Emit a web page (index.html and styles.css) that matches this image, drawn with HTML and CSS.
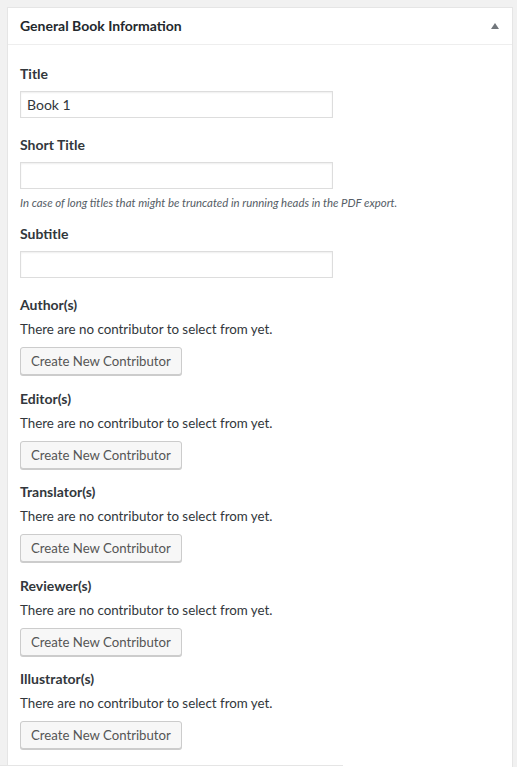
FILE: index.html
```html
<!DOCTYPE html>
<html lang="en">
<head>
<meta charset="utf-8">
<title>General Book Information</title>
<link rel="stylesheet" href="styles.css">
</head>
<body>
<div class="postbox">
  <div class="postbox-header">
    <h2 class="postbox-title">General Book Information</h2>
    <span class="toggle-arrow"></span>
  </div>
  <div class="inside">
    <div class="field">
      <label class="field-label">Title</label>
      <input class="text-input" type="text" value="Book 1">
    </div>
    <div class="field">
      <label class="field-label">Short Title</label>
      <input class="text-input" type="text" value="">
      <p class="description">In case of long titles that might be truncated in running heads in the PDF export.</p>
    </div>
    <div class="field field-after-desc">
      <label class="field-label">Subtitle</label>
      <input class="text-input" type="text" value="">
    </div>
    <div class="field">
      <label class="field-label">Author(s)</label>
      <p class="notice">There are no contributor to select from yet.</p>
      <button class="button" type="button">Create New Contributor</button>
    </div>
    <div class="field field-after-button">
      <label class="field-label">Editor(s)</label>
      <p class="notice">There are no contributor to select from yet.</p>
      <button class="button" type="button">Create New Contributor</button>
    </div>
    <div class="field field-after-button">
      <label class="field-label">Translator(s)</label>
      <p class="notice">There are no contributor to select from yet.</p>
      <button class="button" type="button">Create New Contributor</button>
    </div>
    <div class="field field-after-button">
      <label class="field-label">Reviewer(s)</label>
      <p class="notice">There are no contributor to select from yet.</p>
      <button class="button" type="button">Create New Contributor</button>
    </div>
    <div class="field field-after-button">
      <label class="field-label">Illustrator(s)</label>
      <p class="notice">There are no contributor to select from yet.</p>
      <button class="button" type="button">Create New Contributor</button>
    </div>
  </div>
</div>
<div class="overlap-edge"></div>
</body>
</html>
```

FILE: styles.css
```css
html, body {
  margin: 0;
  padding: 0;
  background: #f1f1f1;
  overflow: hidden;
}
body {
  position: relative;
  padding: 7px 4px 0 7px;
  font-family: "Lato", "Open Sans", sans-serif;
  color: #23282d;
  font-size: 13px;
  height: 767px;
  box-sizing: border-box;
}
.postbox {
  box-sizing: border-box;
  background: #fff;
  border: 1px solid #e5e5e5;
  border-bottom: none;
  height: 760px;
}
.postbox-header {
  display: flex;
  align-items: center;
  justify-content: space-between;
  height: 36px;
  padding: 0 12px;
  border-bottom: 1px solid #eee;
}
.postbox-title {
  margin: 0;
  font-size: 14px;
  font-weight: 700;
  line-height: 20px;
  color: #23282d;
}
.toggle-arrow {
  width: 0;
  height: 0;
  border-left: 4px solid transparent;
  border-right: 4px solid transparent;
  border-bottom: 6px solid #72777c;
  margin-right: 1px;
  margin-top: -1px;
}
.inside {
  padding: 19px 12px 0 12px;
}
.field {
  display: flex;
  flex-direction: column;
  align-items: flex-start;
}
.field + .field {
  margin-top: 17px;
}
.field-after-desc.field {
  margin-top: 12px;
}
.field-after-button.field {
  margin-top: 13.5px;
}
.field-label {
  font-size: 14px;
  font-weight: 700;
  line-height: 20px;
  margin-bottom: 7px;
  color: #32373c;
}
.text-input {
  box-sizing: border-box;
  width: 313px;
  height: 27px;
  margin: 0;
  padding: 2px 6px;
  border: 1px solid #ddd;
  box-shadow: inset 0 1px 2px rgba(0,0,0,.07);
  background: #fff;
  color: #32373c;
  font-family: inherit;
  font-size: 14px;
  outline: none;
}
.description {
  margin: 5px 0 0 0;
  font-size: 11.4px;
  line-height: 18px;
  font-style: italic;
  color: #555d66;
}
.field-label + .notice {
  margin-top: -2px;
}
.notice {
  margin: 0 0 9px 0;
  font-size: 13.35px;
  line-height: 18px;
  color: #32373c;
}
.button {
  box-sizing: border-box;
  height: 28px;
  margin: 0;
  padding: 0 10px 1px;
  border: 1px solid #ccc;
  border-radius: 3px;
  background: #f7f7f7;
  box-shadow: 0 1px 0 #ccc;
  color: #555;
  font-family: inherit;
  font-size: 13.2px;
  line-height: 26px;
  cursor: pointer;
}
.overlap-edge {
  position: absolute;
  left: 0;
  top: 765px;
  width: 343px;
  height: 2px;
  background: #fff;
  border-top: 1px solid #e5e5e5;
  box-sizing: border-box;
}
```
